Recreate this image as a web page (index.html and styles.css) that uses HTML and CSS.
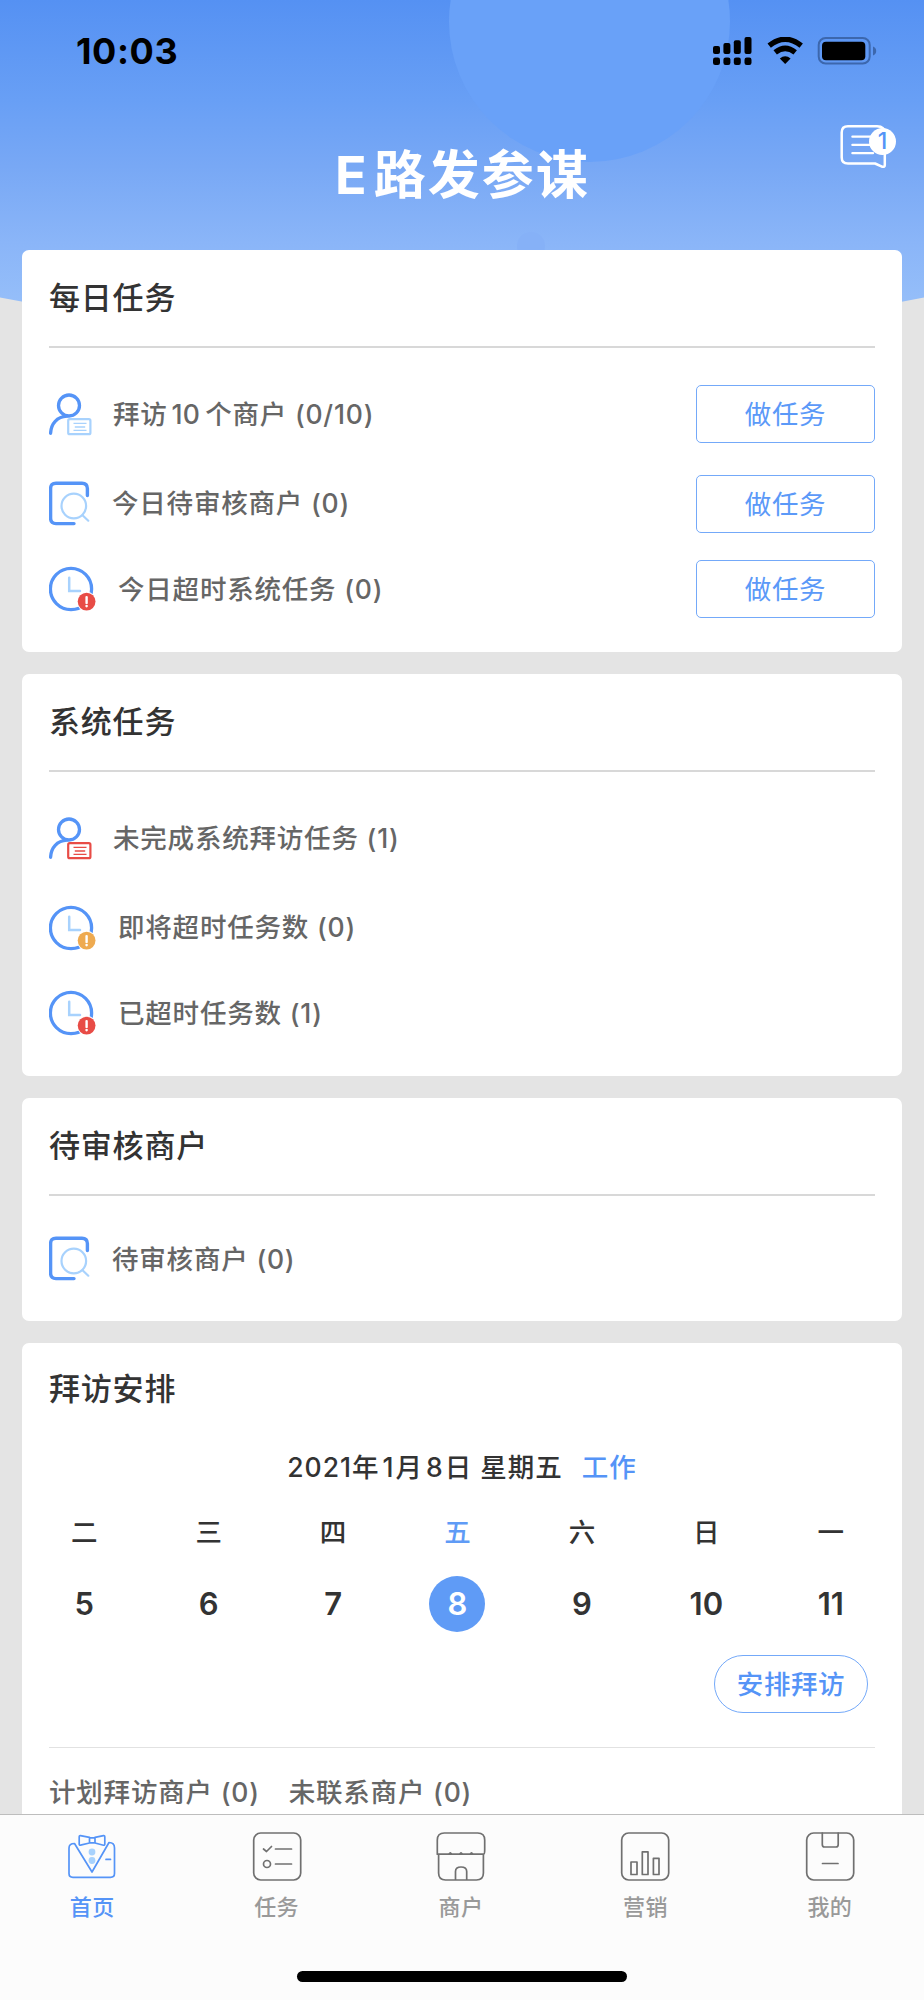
FILE: index.html
```html
<!DOCTYPE html>
<html lang="zh-CN">
<head>
<meta charset="utf-8">
<title>E路发参谋</title>
<link rel="stylesheet" href="styles.css">
</head>
<body>
<svg class="defs" width="0" height="0">
  <defs>
    <symbol id="person" viewBox="0 0 48 48">
      <circle cx="20" cy="15.5" r="10.5" fill="none" stroke="#5594f7" stroke-width="3.3"/>
      <path d="M1.6 43.3C2 33.5 8 26.8 18 26.2" fill="none" stroke="#5594f7" stroke-width="3.3" stroke-linecap="round"/>
      <rect x="19.2" y="29.2" width="22.2" height="15" rx="1.5" fill="#fff" stroke="currentColor" stroke-width="2.2"/>
      <path d="M24.5 33.4h13M25.8 37h10.4M24.5 40.4h13" fill="none" stroke="currentColor" stroke-width="1.4"/>
    </symbol>
    <symbol id="review" viewBox="0 0 48 48">
      <path d="M38.4 15.5V8.5Q38.4 3.2 33 3.2H7Q1.6 3.2 1.6 8.5V38.3Q1.6 43.6 7 43.6H25" fill="none" stroke="#5594f7" stroke-width="3.4" stroke-linecap="round"/>
      <circle cx="24.8" cy="26" r="12.3" fill="none" stroke="#a8d2fd" stroke-width="2.2"/>
      <path d="M33.5 35.3L39.3 40.7" stroke="#a8d2fd" stroke-width="2.2" stroke-linecap="round"/>
    </symbol>
    <symbol id="clock" viewBox="0 0 48 48">
      <circle cx="22" cy="24" r="20.6" fill="none" stroke="#5594f7" stroke-width="3.3"/>
      <path d="M20.2 12.8V26H31" fill="none" stroke="#a8d2fd" stroke-width="2.5" stroke-linecap="round"/>
      <circle cx="37.6" cy="36.6" r="9.8" fill="#fff"/>
      <circle cx="37.6" cy="36.6" r="8.9" fill="currentColor"/>
      <path d="M37.6 32.1v5.8" stroke="#fff" stroke-width="2.4" stroke-linecap="round"/>
      <circle cx="37.6" cy="41.1" r="1.3" fill="#fff"/>
    </symbol>
  </defs>
</svg>

<div class="app">
  <svg class="backdrop" width="924" height="350" viewBox="0 0 924 350">
    <defs>
      <linearGradient id="sky" gradientUnits="userSpaceOnUse" x1="0" y1="0" x2="0" y2="302">
        <stop offset="0" stop-color="#5591f3"/>
        <stop offset=".33" stop-color="#689ff5"/>
        <stop offset=".55" stop-color="#78a8f5"/>
        <stop offset=".8" stop-color="#8ab5f8"/>
        <stop offset="1" stop-color="#95bef9"/>
      </linearGradient>
    </defs>
    <path d="M0 0H924V297.5Q462 390 0 297.5Z" fill="url(#sky)"/>
    <circle cx="589.5" cy="21.5" r="140.5" fill="#69a1f8"/>
    <circle cx="531" cy="246" r="14" fill="#86b1f7"/>
  </svg>

  <header class="status">
    <div class="time">10:03</div>
    <div class="signals">
      <svg width="164" height="28" viewBox="0 0 164 28">
        <rect x="0" y="9" width="7" height="8" rx="2"/><rect x="10.4" y="6" width="7" height="11" rx="2"/><rect x="20.8" y="3.3" width="7" height="13.7" rx="2"/><rect x="31.5" y="0" width="7" height="17" rx="2"/>
        <rect x="0" y="20.5" width="7" height="7.5" rx="2.2"/><rect x="10.4" y="20.5" width="7" height="7.5" rx="2.2"/><rect x="20.8" y="20.5" width="7" height="7.5" rx="2.2"/><rect x="31.5" y="20.5" width="7" height="7.5" rx="2.2"/>
        <path d="M56.2 8.6Q72.2-4 88.2 8.6" fill="none" stroke="#000" stroke-width="5.4"/>
        <path d="M62.2 15.4Q72.2 7.3 82.2 15.4" fill="none" stroke="#000" stroke-width="5.4"/>
        <path d="M66.8 21.6Q72.2 17 77.6 21.6L72.2 27Z"/>
        <rect x="105.7" y="1" width="51" height="25.6" rx="7" fill="none" stroke="#3c67ad" stroke-width="2"/>
        <rect x="109" y="4.7" width="43.3" height="18.5" rx="4"/>
        <path d="M160 9.5q3.2 1.2 3.2 4.5t-3.2 4.5z" fill="#3c67ad"/>
      </svg>
    </div>
  </header>

  <div class="hero">
    <h1>E<span>路发参谋</span></h1>
    <div class="message">
      <svg width="48" height="46" viewBox="0 0 48 46">
        <path d="M8 2.2H37Q44.8 2.4 44.8 9V40.9Q44.8 43.4 42 42.7L35 39.5H8Q1.7 39.5 1.7 33.5V8.4Q1.7 2.2 8 2.2Z" fill="none" stroke="#fff" stroke-width="2.5" stroke-linejoin="round"/>
        <path d="M12.4 12.7H31M12.4 20.9H31M12.4 29.2H33" stroke="#fff" stroke-width="2.3" stroke-linecap="round"/>
      </svg>
      <span class="badge">1</span>
    </div>
  </div>

  <main class="cards">
    <section class="card">
      <h2>每日任务</h2>
      <ul class="rows">
        <li><svg class="ico pale"><use href="#person"/></svg><span class="label">拜访<i class="n">10</i>个商户 <b>(0/10)</b></span><button>做任务</button></li>
        <li><svg class="ico"><use href="#review"/></svg><span class="label near">今日待审核商户 <b>(0)</b></span><button>做任务</button></li>
        <li><svg class="ico red"><use href="#clock"/></svg><span class="label far">今日超时系统任务 <b>(0)</b></span><button>做任务</button></li>
      </ul>
    </section>

    <section class="card">
      <h2>系统任务</h2>
      <ul class="rows">
        <li><svg class="ico red"><use href="#person"/></svg><span class="label">未完成系统拜访任务 <b>(1)</b></span></li>
        <li><svg class="ico amber"><use href="#clock"/></svg><span class="label far">即将超时任务数 <b>(0)</b></span></li>
        <li><svg class="ico red"><use href="#clock"/></svg><span class="label far">已超时任务数 <b>(1)</b></span></li>
      </ul>
    </section>

    <section class="card">
      <h2>待审核商户</h2>
      <ul class="rows single">
        <li><svg class="ico"><use href="#review"/></svg><span class="label near">待审核商户 <b>(0)</b></span></li>
      </ul>
    </section>

    <section class="card plan">
      <h2>拜访安排</h2>
      <p class="date"><span>2021年<i>1</i>月<i>8</i>日 星期五</span><a>工作</a></p>
      <div class="week">
        <div class="day"><span>二</span><b>5</b></div>
        <div class="day"><span>三</span><b>6</b></div>
        <div class="day"><span>四</span><b>7</b></div>
        <div class="day today"><span>五</span><b>8</b></div>
        <div class="day"><span>六</span><b>9</b></div>
        <div class="day"><span>日</span><b>10</b></div>
        <div class="day"><span>一</span><b>11</b></div>
      </div>
      <div class="action"><button class="pill">安排拜访</button></div>
      <p class="totals"><span class="label">计划拜访商户 <b>(0)</b></span><span class="label">未联系商户 <b>(0)</b></span></p>
    </section>
  </main>

  <footer class="dock">
    <nav class="tabs">
      <a class="tab active">
        <svg viewBox="0 0 50 50">
          <path d="M7.5 12.5Q2 12.5 2 17V42.5Q2 46.3 6 46.3H43.5Q47.5 46.3 47.5 42.5V17Q47.5 11.5 42 11.5L25 41Z"/>
          <path d="M22.5 6.4L13.5 4.6Q12.2 4.4 12.2 5.9V12.9Q12.2 14.4 13.5 14.2L22.5 12ZM28 6.4L36.5 4.6Q37.8 4.4 37.8 5.9V12.9Q37.8 14.4 36.5 14.2L28 12ZM22.5 6.8H28V11.8H22.5Z"/>
          <circle cx="25" cy="21" r="3.4" fill="#a8d2fd" stroke="none"/><circle cx="25" cy="29.5" r="3.4" fill="#a8d2fd" stroke="none"/>
          <path d="M39 28.4H43.5"/>
        </svg>
        <span>首页</span>
      </a>
      <a class="tab">
        <svg viewBox="0 0 50 50"><rect x="1.7" y="2" width="47" height="47" rx="7"/><path d="M11.5 18L14.5 20.5L19.5 15.5M23.5 18H39.5M23.5 33H39.5"/><circle cx="15" cy="33" r="3.5"/></svg>
        <span>任务</span>
      </a>
      <a class="tab">
        <svg viewBox="0 0 50 50"><path d="M1.3 23.2V9Q1.3 2 8.3 2H41.7Q48.7 2 48.7 9V19Q48.7 23.2 47.5 23.2ZM2.6 23.2V42Q2.6 49 9.6 49H40.4Q47.4 49 47.4 42V23.2M19.5 49V40.5Q19.5 36 25 36Q30.7 36 30.7 40.5V49"/><path d="M13.4 22.7L14.3 21.8L15.2 22.7ZM24.1 22.7L25 21.8L25.9 22.7ZM34.6 22.7L35.5 21.8L36.4 22.7Z" fill="#707070"/></svg>
        <span>商户</span>
      </a>
      <a class="tab">
        <svg viewBox="0 0 50 50"><rect x="1.7" y="2" width="47" height="47" rx="7"/><path d="M11 31H17V43.5H11ZM22.3 20.8H28V43.5H22.3ZM33.4 27.3H39V43.5H33.4Z"/></svg>
        <span>营销</span>
      </a>
      <a class="tab">
        <svg viewBox="0 0 50 50"><rect x="1.7" y="2" width="47" height="47" rx="7"/><path d="M17.3 2V13.5Q17.3 16 19.5 16H31Q33.2 16 33.2 13.5V2M17.5 32.5H33"/></svg>
        <span>我的</span>
      </a>
    </nav>
    <div class="home"></div>
  </footer>
</div>
</body>
</html>
```

FILE: styles.css
```css
* { box-sizing: border-box; }

body {
  margin: 0;
  background: #e4e4e4;
  font-family: Inter, "Noto Sans CJK SC", sans-serif;
  color: #333;
}

h1, h2, p, ul { margin: 0; padding: 0; }
b, i { font-weight: inherit; font-style: normal; }
.defs { position: absolute; }

.app {
  position: relative;
  width: 924px;
  height: 2000px;
  overflow: hidden;
  display: flex;
  flex-direction: column;
}

.backdrop { position: absolute; left: 0; top: 0; }

.status {
  position: relative;
  height: 101px;
  flex: none;
  display: flex;
  justify-content: space-between;
  align-items: center;
  padding: 0 47px 0 76px;
}
.time { color: #000; font-size: 36px; font-weight: 700; line-height: 40px; letter-spacing: .6px; }
.signals svg { display: block; }

.hero {
  position: relative;
  flex: none;
  height: 149px;
  display: grid;
  grid-template-columns: 1fr auto 1fr;
}
.hero h1 {
  grid-column: 2;
  margin-top: 37px;
  padding-left: 1px;
  color: #fff;
  font-size: 52px;
  line-height: 76px;
  font-weight: 700;
  letter-spacing: 2.1px;
  white-space: nowrap;
}
.hero h1 span { margin-left: 5px; }
.message { position: relative; justify-self: end; width: 84px; padding-top: 23px; }
.message svg { display: block; }
.badge {
  position: absolute;
  left: 29px;
  top: 27px;
  width: 27px;
  height: 27px;
  border-radius: 50%;
  background: #fff;
  color: #5594f7;
  font-size: 23px;
  font-weight: 500;
  line-height: 27px;
  text-align: center;
}

.cards {
  position: relative;
  flex: 1;
  min-height: 0;
  overflow: hidden;
  padding: 0 22px;
  display: flex;
  flex-direction: column;
  gap: 22px;
}
.card {
  flex: none;
  background: #fff;
  border-radius: 7px;
  padding: 0 27px;
}
.card h2 {
  height: 98px;
  border-bottom: 2px solid #d8d8d8;
  font-size: 31px;
  line-height: 96px;
  font-weight: 500;
  letter-spacing: .8px;
}

.rows {
  list-style: none;
  padding: 37px 0 34px;
  display: grid;
  grid-template-rows: 58px 58px 58px;
  row-gap: 29.5px;
}
.rows li { display: flex; align-items: center; }
.rows li:nth-child(2) { position: relative; top: 2px; }
.rows.single { grid-template-rows: 58px; padding: 34px 0 33px; }
.ico { flex: none; width: 48px; height: 48px; margin-right: 16px; color: #a8d2fd; }
.ico.red { color: #e84c46; }
.ico.amber { color: #eeaa50; }
.label {
  flex: 1;
  color: #666;
  font-size: 26.5px;
  line-height: 38px;
  padding-bottom: 1px;
  font-weight: 500;
  letter-spacing: .8px;
  white-space: nowrap;
}
.label b { letter-spacing: .8px; }
.label.near { margin-left: -1px; }
.label.far { margin-left: 5px; }
.label .n { letter-spacing: .2px; margin: 0 5px 0 4px; }

button {
  width: 179px;
  height: 58px;
  padding: 0;
  border: 1px solid #74a9f9;
  border-radius: 5px;
  background: #fff;
  color: #5b99f8;
  font: 400 26.5px/56px Inter, "Noto Sans CJK SC", sans-serif;
  letter-spacing: .6px;
}

.plan { height: 500px; }
.plan h2 { border: 0; height: 93px; line-height: 92px; }
.date {
  height: 63px;
  line-height: 62px;
  display: flex;
  justify-content: center;
  gap: 19px;
  font-size: 26.5px;
  font-weight: 500;
  letter-spacing: 1px;
}
.date i { margin: 0 1px 0 3px; }
.date a { color: #5594f7; }
.week {
  display: grid;
  grid-template-columns: repeat(7, 1fr);
  margin: 0 -18px 0 -27px;
}
.day { display: flex; flex-direction: column; align-items: center; }
.day span { height: 77px; font-size: 26.5px; line-height: 66px; font-weight: 500; }
.day b {
  width: 56px;
  height: 56px;
  border-radius: 50%;
  font-size: 31px;
  line-height: 56px;
  font-weight: 600;
  text-align: center;
}
.today span { color: #5f9bf6; }
.today b { background: #5f9bf6; color: #fff; }
.action { display: flex; justify-content: flex-end; padding: 23px 7px 34px 0; }
.pill { width: 154px; border-radius: 29px; font-weight: 500; letter-spacing: .6px; color: #5594f7; }
.totals {
  border-top: 1px solid #e2e2e2;
  padding-top: 25px;
  display: flex;
  gap: 29px;
}
.totals .label { flex: none; }

.dock {
  position: relative;
  flex: none;
  height: 186px;
  background: #fcfcfc;
  border-top: 1px solid #bdbdbd;
  display: flex;
  flex-direction: column;
  align-items: center;
  justify-content: space-between;
  padding-bottom: 18px;
}
.tabs { width: 924px; display: grid; grid-template-columns: repeat(5, 1fr); padding: 16px 2px 0 0; }
.tab { display: flex; flex-direction: column; align-items: center; color: #999; }
.tab svg { width: 50px; height: 50px; fill: none; stroke: #707070; stroke-width: 1.7; stroke-linecap: round; stroke-linejoin: round; }
.tab.active svg { stroke: #5594f7; }
.tab span { margin-top: 9px; font-size: 22px; line-height: 34px; font-weight: 500; letter-spacing: .4px; }
.tab.active { color: #5594f7; }
.home { width: 330px; height: 11px; border-radius: 6px; background: #000; }
```
